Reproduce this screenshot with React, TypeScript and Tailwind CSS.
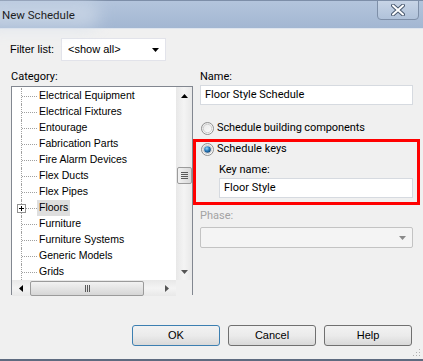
import React from "react";

const seg = { fontFamily: 'Roboto, Lato, sans-serif' };
const tah = { fontFamily: '"Liberation Sans", Arial, sans-serif' };

function Radio({ checked }: { checked?: boolean }) {
  return (
    <svg width="13" height="13" viewBox="0 0 13 13" className="shrink-0">
      <defs>
        <linearGradient id={checked ? "rg1" : "rg0"} x1="0" y1="0" x2="1" y2="1">
          <stop offset="0" stopColor="#e6e6e6" />
          <stop offset="1" stopColor="#ffffff" />
        </linearGradient>
        <radialGradient id="dot" cx="0.4" cy="0.35" r="0.7">
          <stop offset="0" stopColor="#9ad6f5" />
          <stop offset="0.5" stopColor="#2b7fc0" />
          <stop offset="1" stopColor="#0e3d6b" />
        </radialGradient>
      </defs>
      <circle cx="6.5" cy="6.5" r="6" fill={`url(#${checked ? "rg1" : "rg0"})`} stroke="#8f8f8f" />
      <circle cx="6.5" cy="6.5" r="4.2" fill="none" stroke="#d0d0d0" strokeWidth="1" />
      {checked && <circle cx="6.5" cy="6.5" r="3.3" fill="url(#dot)" />}
    </svg>
  );
}

function TriDown({ color = "#000" }: { color?: string }) {
  return (
    <svg width="7" height="4" viewBox="0 0 7 4">
      <path d="M0 0H7L3.5 4Z" fill={color} />
    </svg>
  );
}

const items = [
  "Electrical Equipment",
  "Electrical Fixtures",
  "Entourage",
  "Fabrication Parts",
  "Fire Alarm Devices",
  "Flex Ducts",
  "Flex Pipes",
  "Floors",
  "Furniture",
  "Furniture Systems",
  "Generic Models",
  "Grids",
];

function TreeRow({ label }: { label: string }) {
  const floors = label === "Floors";
  return (
    <div className="relative flex h-[16px] items-center">
      <div className="absolute left-[9px] top-0 h-full border-l border-dotted border-[#a0a0a0]" />
      <div className="absolute left-[10px] top-[8px] w-[15px] border-t border-dotted border-[#a0a0a0]" />
      {floors && (
        <div className="absolute left-[5px] top-[4px] flex h-[9px] w-[9px] items-center justify-center border border-[#919191] bg-white">
          <svg width="5" height="5" viewBox="0 0 5 5">
            <path d="M0 2.5H5M2.5 0V5" stroke="#000" strokeWidth="1" />
          </svg>
        </div>
      )}
      <div
        className={`ml-[25px] flex h-[16px] items-center px-[2px] text-[10.5px] text-black ${floors ? "bg-[#dedede]" : ""}`}
        style={tah}
      >
        {label}
      </div>
    </div>
  );
}

export default function App() {
  return (
    <div className="relative flex h-[361px] w-[423px] flex-col overflow-hidden bg-[#f0f0f0]">
      {/* Title bar */}
      <div className="relative flex h-[28px] shrink-0 items-start border-t border-[#7d8ea8] bg-gradient-to-b from-[#b3c4dc] to-[#a3b7d2]">
        <div className="absolute left-[-20px] top-[0px] h-[28px] w-[120px] rounded-full bg-[#d4deeb] opacity-60 blur-[8px]" />
        <div className="relative ml-[2px] mt-[5px] text-[11.5px] leading-[18px] text-[#1e1e1e]" style={seg}>
          New Schedule
        </div>
        <div className="relative ml-auto mr-[4px] mt-[-1px] flex h-[20px] w-[42px] items-center justify-center rounded-b-[4px] border border-[#7e8fa8] bg-gradient-to-b from-[#c7d4e6] to-[#b0c2da]">
          <svg width="14" height="12" viewBox="0 0 14 12">
            <path d="M2 1.5L12 10.5M12 1.5L2 10.5" stroke="#4a5a70" strokeWidth="4" strokeLinecap="round" />
            <path d="M2 1.5L12 10.5M12 1.5L2 10.5" stroke="#ffffff" strokeWidth="2" strokeLinecap="round" />
          </svg>
        </div>
      </div>
      <div className="h-[1px] shrink-0 bg-[#dfe5ee]" />

      {/* Body */}
      <div className="flex flex-1 flex-col">
        {/* Filter row */}
        <div className="ml-[10px] mt-[9px] flex items-center">
          <span className="text-[11px] text-black" style={tah}>
            Filter list:
          </span>
          <div className="ml-[7px] flex h-[23px] w-[105px] items-center justify-between border border-[#e2e3ea] bg-white pl-[6px] pr-[6px]">
            <span className="text-[11px] text-black" style={tah}>
              &lt;show all&gt;
            </span>
            <TriDown />
          </div>
        </div>

        {/* Columns */}
        <div className="ml-[11px] mt-[7px] flex">
          {/* Left */}
          <div className="flex w-[182px] flex-col">
            <div className="h-[18px] text-[11px] leading-[17px] text-black" style={seg}>
              Category:
            </div>
            <div className="flex h-[209px] flex-col border border-[#828790] bg-white">
              <div className="flex flex-1">
                <div className="flex-1 overflow-hidden pt-[1px]">
                  {items.map((it) => (
                    <TreeRow key={it} label={it} />
                  ))}
                </div>
                {/* vertical scrollbar */}
                <div className="flex w-[16px] flex-col items-center bg-gradient-to-r from-[#e8e8e8] via-[#f4f4f4] to-[#e8e8e8]">
                  <div className="flex h-[17px] items-center justify-center">
                    <svg width="7" height="4" viewBox="0 0 7 4">
                      <path d="M0 4H7L3.5 0Z" fill="#000" />
                    </svg>
                  </div>
                  <div className="mt-[63px] flex h-[17px] w-[15px] flex-col items-center justify-center gap-[1px] rounded-[2px] border border-[#9b9b9b] bg-gradient-to-r from-[#f2f2f2] to-[#d8d8d8]">
                    <div className="h-[1px] w-[7px] bg-[#5a5a5a]" />
                    <div className="h-[1px] w-[7px] bg-[#5a5a5a]" />
                    <div className="h-[1px] w-[7px] bg-[#5a5a5a]" />
                    <div className="h-[1px] w-[7px] bg-[#5a5a5a]" />
                  </div>
                  <div className="mt-auto flex h-[17px] items-center justify-center">
                    <TriDown color="#555" />
                  </div>
                </div>
              </div>
              {/* horizontal scrollbar */}
              <div className="flex h-[16px] shrink-0">
                <div className="flex flex-1 items-center bg-gradient-to-b from-[#e8e8e8] via-[#f4f4f4] to-[#e8e8e8]">
                  <div className="flex w-[18px] items-center justify-center">
                    <svg width="4" height="7" viewBox="0 0 4 7">
                      <path d="M4 0V7L0 3.5Z" fill="#000" />
                    </svg>
                  </div>
                  <div className="flex h-[15px] w-[114px] items-center justify-center gap-[1px] rounded-[2px] border border-[#9b9b9b] bg-gradient-to-b from-[#f2f2f2] to-[#d6d6d6]">
                    <div className="h-[7px] w-[1px] bg-[#5a5a5a]" />
                    <div className="h-[7px] w-[1px] bg-[#5a5a5a]" />
                    <div className="h-[7px] w-[1px] bg-[#5a5a5a]" />
                  </div>
                  <div className="ml-auto flex w-[18px] items-center justify-center">
                    <svg width="4" height="7" viewBox="0 0 4 7">
                      <path d="M0 0V7L4 3.5Z" fill="#555" />
                    </svg>
                  </div>
                </div>
                <div className="w-[16px] bg-[#f0f0f0]" />
              </div>
            </div>
          </div>

          {/* Right */}
          <div className="ml-[7px] flex w-[213px] flex-col">
            <div className="h-[17px] text-[11px] leading-[17px] text-black" style={seg}>
              Name:
            </div>
            <div className="flex h-[20px] items-center border border-[#d6dae0] bg-white pl-[4px] text-[11px] text-black" style={seg}>
              Floor Style Schedule
            </div>
            <div className="mt-[15px] flex h-[16px] items-center gap-[3px] pl-[1px]">
              <Radio />
              <span className="text-[11px] tracking-[-0.1px] text-black" style={seg}>
                Schedule building components
              </span>
            </div>
            <div className="ml-[-7px] mr-[-7px] mt-[3px] flex flex-col border-[3px] border-[#ff0000] pb-[4px] pl-[5px] pr-[4px]">
              <div className="flex h-[15px] items-center gap-[3px]">
                <Radio checked />
                <span className="text-[11px] text-black" style={seg}>
                  Schedule keys
                </span>
              </div>
              <div className="ml-[18px] mt-[5px] h-[16px] text-[11px] leading-[16px] text-black" style={seg}>
                Key name:
              </div>
              <div className="ml-[18px] flex h-[20px] items-center border border-[#d6dae0] bg-white pl-[4px] text-[11px] text-black" style={seg}>
                Floor Style
              </div>
            </div>
            <div className="mt-[3px] h-[16px] text-[11px] leading-[16px] text-[#a3a3a3]" style={seg}>
              Phase:
            </div>
            <div className="mt-[3px] flex h-[21px] items-center justify-end rounded-[2px] border border-[#c3c3c3] bg-[#f4f4f4] pr-[6px]">
              <TriDown color="#8a8a8a" />
            </div>
          </div>
        </div>

        {/* Buttons */}
        <div className="mr-[11px] mt-auto mb-[13px] flex justify-end gap-[8px]">
          {["OK", "Cancel", "Help"].map((b) => (
            <div
              key={b}
              className={`flex h-[21px] w-[88px] items-center justify-center rounded-[3px] border bg-gradient-to-b from-[#f2f2f2] via-[#ebebeb] to-[#d9d9d9] text-[11px] text-black ${
                b === "OK" ? "border-[#3c7fb1]" : "border-[#707070]"
              }`}
              style={tah}
            >
              {b}
            </div>
          ))}
        </div>
      </div>

      {/* size grip */}
      <div className="absolute bottom-[4px] right-[2px]">
        <svg width="10" height="10" viewBox="0 0 10 10">
          {[
            [8, 2],
            [8, 5],
            [5, 5],
            [8, 8],
            [5, 8],
            [2, 8],
          ].map(([x, y], i) => (
            <rect key={i} x={x} y={y} width="1" height="1" fill="#b0b0b0" />
          ))}
        </svg>
      </div>
      <div className="h-[2px] shrink-0 bg-[#5e6b80]" />
    </div>
  );
}
